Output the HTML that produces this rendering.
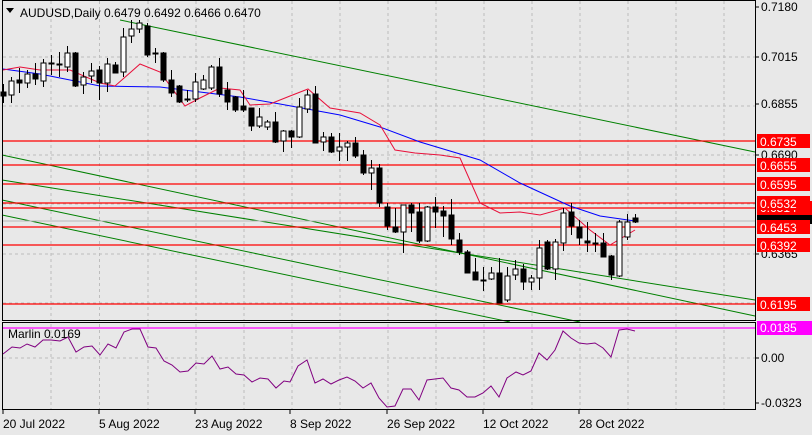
<!DOCTYPE html>
<html><head><meta charset="utf-8"><style>
body{margin:0;width:812px;height:435px;overflow:hidden;background:#e8e8e8;font-family:"Liberation Sans",sans-serif}
svg{display:block}
text{font-family:"Liberation Sans",sans-serif;font-size:12px}
</style></head><body>
<svg id="s" width="812" height="435" xmlns="http://www.w3.org/2000/svg"></svg>
<script>
var s='';
s+='<rect width="812" height="435" fill="#e8e8e8"/>';
var vx=[51,99.5,148,196,244,292,340,388,436,484,532,580,628,676,724];
vx.forEach(function(x){s+='<line x1="'+x+'" y1="1" x2="'+x+'" y2="320" stroke="#bdbdbd" stroke-dasharray="3,3"/>';s+='<line x1="'+x+'" y1="324" x2="'+x+'" y2="409" stroke="#bdbdbd" stroke-dasharray="3,3"/>';});
[57,106,155,204,254,303].forEach(function(y){s+='<line x1="3" y1="'+y+'" x2="755" y2="'+y+'" stroke="#bdbdbd" stroke-dasharray="3,3"/>';});
s+='<line x1="3" y1="358" x2="755" y2="358" stroke="#bdbdbd" stroke-dasharray="3,3"/>';
// green channel lines
var g=[[120,20,755,152],[2,155,755,316],[2,180,755,300],[2,200,580,322],[2,215,510,322]];
g.forEach(function(l){s+='<line x1="'+l[0]+'" y1="'+l[1]+'" x2="'+l[2]+'" y2="'+l[3]+'" stroke="#008000" stroke-width="1"/>';});
// red lines
[141,165,184,203,208,227,245,304].forEach(function(y){s+='<line x1="3" y1="'+y+'" x2="755" y2="'+y+'" stroke="#ff0000" stroke-width="1.3"/>';});
s+='<line x1="3" y1="221" x2="755" y2="221" stroke="#b8b8b8"/>';
// MAs
var blue=[[3,69],[40,74],[100,86],[160,87],[240,97],[280,104],[340,115],[380,127],[420,142],[480,160],[520,183],[570,206],[600,216],[635,221]];
var red=[[3,70],[20,67],[40,70],[70,70],[100,83],[115,86],[140,64],[160,72],[185,106],[200,98],[220,88],[240,90],[250,105],[270,104],[290,96],[308,89],[330,108],[360,113],[380,125],[395,150],[415,153],[440,155],[460,158],[480,203],[500,213],[520,212],[540,215],[565,208],[590,230],[610,245],[635,230]];
function pl(p,c){return '<polyline fill="none" stroke="'+c+'" stroke-width="1" points="'+p.map(function(a){return a.join(',')}).join(' ')+'"/>';}
s+=pl(blue,'#0000ff');s+=pl(red,'#e8103a');
// candles: [o,c,h,l] in y
var C=[[92,96,84,103],[95,81,77,103],[80,83,68,93],[83,74,70,88],[74,79,63,85],[81,63,59,87],[63,64,55,75],[64,65,52,77],[67,53,46,72],[53,86,52,87],[85,77,72,94],[76,71,63,83],[70,83,66,100],[83,64,58,92],[65,73,62,73],[72,37,28,77],[36,29,20,43],[29,23,20,33],[26,55,23,57],[53,54,48,63],[53,80,52,82],[80,93,70,97],[86,102,85,103],[99,100,90,102],[99,82,73,102],[89,80,75,90],[88,67,65,90],[67,94,58,97],[90,102,82,110],[97,110,96,112],
[106,110,90,112],[108,126,108,131],[126,117,108,128],[127,122,120,130],[122,142,112,143],[141,131,130,152],[131,137,130,148],[137,107,98,138],[109,95,90,113],[94,143,86,143],[142,137,132,151],[137,152,133,153],[151,147,133,161],[147,143,141,161],[143,156,137,158],[155,173,150,175],[173,168,160,190],[168,203,164,207],[207,226,203,230],[227,232,208,233],[232,205,205,253],[205,213,203,232],[212,241,203,243],[241,207,206,242],[207,212,197,228],[211,216,206,237],[215,239,199,245],[240,252,233,255],[252,273,250,273],[272,280,258,280],[280,281,267,291],[279,273,267,280],[273,303,258,303],[300,276,267,302],[275,269,260,280],
[269,282,264,290],[282,278,275,290],[278,248,240,290],[242,269,240,270],[269,242,239,280],[243,213,208,251],[212,226,203,235],[227,238,220,245],[241,243,222,252],[243,244,233,252],[243,257,233,257],[256,275,255,280],[276,222,220,277],[237,222,214,240],[218,222,214,223]];
C.forEach(function(c,k){var x=3+8*k;var t=Math.min(c[0],c[1]),b=Math.max(c[0],c[1]);var h=Math.max(b-t,1);var bull=c[1]<c[0];
s+='<line x1="'+(x+0.5)+'" y1="'+c[2]+'" x2="'+(x+0.5)+'" y2="'+c[3]+'" stroke="#000"/>';
s+='<rect x="'+(x-2)+'" y="'+t+'" width="5" height="'+h+'" fill="'+(bull?'#fff':'#000')+'" stroke="#000" stroke-width="1"/>';});
// oscillator
s+='<line x1="3" y1="328" x2="755" y2="328" stroke="#ff00ff" stroke-width="1.3"/>';
var o=[[3,354],[12,347],[20,348],[27,344],[35,347],[43,340],[51,340],[60,341],[68,337],[76,352],[84,347],[92,346],[100,355],[108,344],[116,348],[124,332],[132,329],[140,329],[148,347],[156,348],[164,361],[172,365],[180,372],[188,371],[196,363],[204,364],[212,356],[220,369],[228,367],[236,374],[244,375],[252,382],[260,378],[268,379],[276,388],[284,381],[290,382],[298,366],[307,360],[315,383],[323,379],[331,384],[339,380],[347,377],[355,381],[363,388],[371,383],[379,398],[387,407],[395,406],[403,389],[411,389],[419,400],[427,380],[435,379],[443,378],[451,388],[459,390],[467,397],[475,397],[483,393],[491,386],[499,397],[507,378],[516,372],[523,375],[531,371],[539,353],[547,360],[555,350],[563,331],[571,338],[579,343],[587,344],[595,343],[603,348],[611,357],[619,330],[627,329],[635,331]];
s+=pl(o,'#800080');
// frames
s+='<rect x="2.5" y="0.5" width="753" height="320" fill="none" stroke="#000"/>';
s+='<rect x="2.5" y="322.5" width="753" height="87" fill="none" stroke="#000"/>';
// header
s+='<path d="M6 8 L14 8 L10 13 Z" fill="#000"/>';
s+='<text x="20" y="17" fill="#000">AUDUSD,Daily  0.6479 0.6492 0.6466 0.6470</text>';
s+='<text x="8" y="338" fill="#000">Marlin 0.0169</text>';
// right axis
function ax(y,t){s+='<line x1="755" y1="'+y+'" x2="759" y2="'+y+'" stroke="#000"/><text x="761" y="'+(y+4)+'" fill="#000">'+t+'</text>';}
ax(7,'0.7180');ax(57,'0.7015');ax(104,'0.6855');ax(155,'0.6690');ax(254,'0.6365');ax(358,'0.00');ax(403,'-0.0323');
s+='<rect x="757" y="215" width="55" height="9" fill="#000"/>';
s+='<rect x="757" y="201" width="55" height="14" fill="#ff0000"/><text x="760" y="212" fill="#fff">0.6514</text>';
[[141,'0.6735'],[165,'0.6655'],[184,'0.6595'],[203,'0.6532'],[227,'0.6453'],[245,'0.6392'],[304,'0.6195']].forEach(function(a){s+='<rect x="757" y="'+(a[0]-7)+'" width="53" height="14" fill="#ff0000"/><text x="760" y="'+(a[0]+5)+'" fill="#fff">'+a[1]+'</text>';});
s+='<rect x="757" y="321" width="55" height="14" fill="#ff00ff"/><text x="760" y="332" fill="#fff">0.0185</text>';
// bottom axis
[[3,'20 Jul 2022'],[99,'5 Aug 2022'],[195,'23 Aug 2022'],[290,'8 Sep 2022'],[387,'26 Sep 2022'],[483,'12 Oct 2022'],[579,'28 Oct 2022']].forEach(function(a){s+='<line x1="'+a[0]+'" y1="410" x2="'+a[0]+'" y2="414" stroke="#000"/><text x="'+a[0]+'" y="428" fill="#000">'+a[1]+'</text>';});
document.getElementById('s').innerHTML=s;
</script>
</body></html>
